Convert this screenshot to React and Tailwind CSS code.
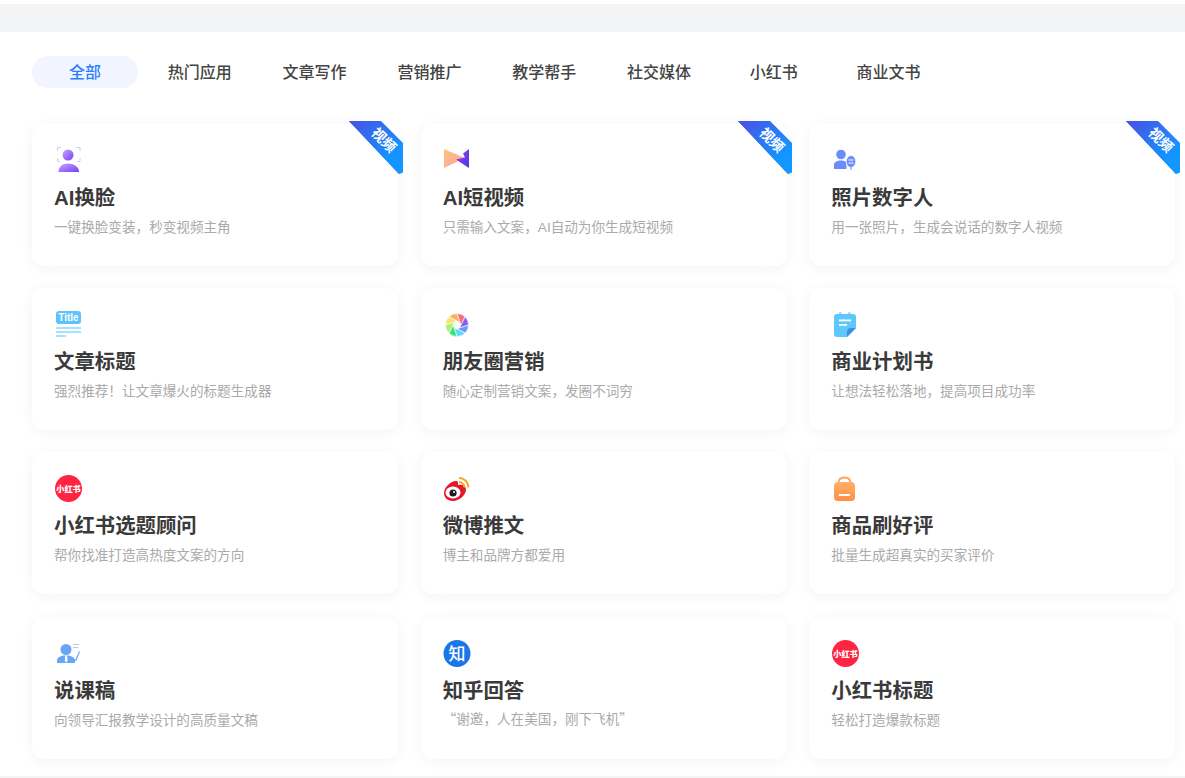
import React from "react";

const tabs = ["全部", "热门应用", "文章写作", "营销推广", "教学帮手", "社交媒体", "小红书", "商业文书"];

// Ribbon in the top right corner of the video cards
function Ribbon({ id }) {
  return (
    <div className="absolute top-[-3px] right-[-5px] w-[54px] h-[53px]">
      <svg width="54" height="53" viewBox="0 0 54 53" className="block">
        <defs>
          <linearGradient id={id} x1="0" y1="0" x2="1" y2="1">
            <stop offset="0" stopColor="#4a4fe4" />
            <stop offset="0.75" stopColor="#1296ff" />
          </linearGradient>
        </defs>
        <path d="M0 0H2L50 48V53Z" fill="#1a5fd0" />
        <path d="M0 0H32L54 22V50.5Q54 52 53 52L50 53Z" fill={`url(#${id})`} />
      </svg>
      <span className="absolute left-[18.5px] top-[10px] w-[32px] text-center text-[14px] leading-[18px] font-bold text-white rotate-45">视频</span>
    </div>
  );
}

function FaceIcon() {
  return (
    <svg width="28" height="28" viewBox="0 0 28 28" className="block">
      <defs>
        <linearGradient id="face" x1="0" y1="0" x2="1" y2="1">
          <stop offset="0" stopColor="#c4a8ff" />
          <stop offset="1" stopColor="#7a3cf5" />
        </linearGradient>
      </defs>
      <path d="M7 1.5H3.5V5M22 1.5H26V5M3.5 12V15.5H6M26 12V15.5H23" fill="none" stroke="#d6c6fd" strokeWidth="1" />
      <circle cx="14" cy="9" r="5.5" fill="url(#face)" />
      <path d="M4.5 26C4.5 20.5 8.5 17.5 14 17.5C19.5 17.5 25 20.5 25 26Z" fill="url(#face)" />
    </svg>
  );
}

function VideoIcon() {
  return (
    <svg width="28" height="28" viewBox="0 0 28 28" className="block">
      <defs>
        <linearGradient id="peach" x1="0" y1="0" x2="1" y2="1">
          <stop offset="0" stopColor="#ffc27d" />
          <stop offset="1" stopColor="#fda4a0" />
        </linearGradient>
        <linearGradient id="violet" x1="0" y1="0" x2="1" y2="1">
          <stop offset="0" stopColor="#a03cf5" />
          <stop offset="1" stopColor="#4a38e0" />
        </linearGradient>
      </defs>
      <path d="M1 3L22 12L1 22Z" fill="url(#peach)" />
      <path d="M26 3V22L13 13.5L22 11.5L20 7.5Z" fill="url(#violet)" />
    </svg>
  );
}

function TalkIcon() {
  return (
    <svg width="28" height="28" viewBox="0 0 28 28" className="block">
      <circle cx="10" cy="8.5" r="4.8" fill="#6b8cff" />
      <path d="M3 23V19C3 16 6 14.5 10 14.5C12 14.5 14 15 15.5 16V23Z" fill="#6b8cff" />
      <ellipse cx="20" cy="15.5" rx="4.8" ry="6" fill="#6b8cff" stroke="#ffffff" strokeWidth="0.8" />
      <path d="M20 21V24" stroke="#6b8cff" strokeWidth="1" />
      <path d="M17.5 14H22.5M17.5 17H22.5" stroke="#ffffff" strokeWidth="1" />
    </svg>
  );
}

function TitleIcon() {
  return (
    <svg width="28" height="28" viewBox="0 0 28 28" className="block">
      <rect x="2" y="1" width="25" height="13" rx="3" fill="#5cc3fb" />
      <text x="14.5" y="11" textAnchor="middle" fontSize="10" fontWeight="700" fill="#ffffff" fontFamily="'Liberation Sans', sans-serif">Title</text>
      <rect x="2" y="17" width="25" height="2" fill="#a5e2fd" />
      <rect x="2" y="21" width="25" height="2" fill="#a5e2fd" />
      <rect x="2" y="25" width="10" height="2" fill="#a5e2fd" />
    </svg>
  );
}

const blades = ["#f76f78", "#8a5cf0", "#6b9cf5", "#5cd8fb", "#3fe07f", "#b0f06f", "#f7e26a", "#f9b262"];

function ApertureIcon() {
  return (
    <svg width="28" height="28" viewBox="0 0 28 28" className="block">
      {blades.map((c, i) => (
        <path
          key={c}
          d="M14 3.5A11.5 11.5 0 0 1 22.13 6.87L18 15L16.83 12.17Z"
          fill={c}
          stroke="#ffffff"
          strokeWidth="0.6"
          transform={`rotate(${i * 45} 14 15)`}
        />
      ))}
    </svg>
  );
}

function NoteIcon() {
  return (
    <svg width="28" height="28" viewBox="0 0 28 28" className="block">
      <rect x="8" y="2" width="2.5" height="5" rx="1.2" fill="#8ed8fd" />
      <rect x="17" y="2" width="2.5" height="5" rx="1.2" fill="#8ed8fd" />
      <path d="M6 4H22Q25 4 25 7V18L16 27H6Q3 27 3 24V7Q3 4 6 4Z" fill="#5dc8fc" />
      <path d="M25 18L16 27V22Q16 18 20 18Z" fill="#3f8fe0" />
      <rect x="8" y="9.5" width="12" height="1.8" fill="#ffffff" />
      <rect x="8" y="14" width="8" height="1.8" fill="#ffffff" />
    </svg>
  );
}

function XhsIcon() {
  return (
    <svg width="28" height="28" viewBox="0 0 28 28" className="block">
      <circle cx="14.5" cy="14.5" r="13.5" fill="#ff2442" />
      <text x="14.5" y="17.5" textAnchor="middle" fontSize="8.2" fontWeight="900" fill="#ffffff" fontFamily="'Noto Sans CJK SC', sans-serif">小红书</text>
    </svg>
  );
}

function WeiboIcon() {
  return (
    <svg width="28" height="28" viewBox="0 0 28 28" className="block">
      <path d="M1 19C1 14 7 7 13 7C15 7 15.5 9 15 11C19 10 22.5 11.5 23 15C23.5 20 17 27 10 27C5 27 1 24 1 19Z" fill="#e6162d" />
      <ellipse cx="10" cy="18.5" rx="7.5" ry="6" fill="#ffffff" />
      <circle cx="10" cy="19" r="3.6" fill="#1c1c1c" />
      <circle cx="11" cy="18" r="1" fill="#ffffff" />
      <path d="M16 4A9.5 9.5 0 0 1 25.5 13.5M16 8A5.5 5.5 0 0 1 21.5 13.5" fill="none" stroke="#f5a623" strokeWidth="2" />
    </svg>
  );
}

function BagIcon() {
  return (
    <svg width="28" height="28" viewBox="0 0 28 28" className="block">
      <defs>
        <linearGradient id="bag" x1="0" y1="0" x2="0" y2="1">
          <stop offset="0" stopColor="#ffb06a" />
          <stop offset="1" stopColor="#ff8f40" />
        </linearGradient>
      </defs>
      <path d="M7.5 11V9C7.5 5.5 10 3.5 13.5 3.5C17 3.5 19.5 5.5 19.5 9V11" fill="none" stroke="#ffa45c" strokeWidth="1.8" />
      <rect x="3" y="8" width="21" height="19" rx="4" fill="url(#bag)" />
      <rect x="8" y="20" width="11" height="2" fill="#ffffff" />
    </svg>
  );
}

function TeacherIcon() {
  return (
    <svg width="28" height="28" viewBox="0 0 28 28" className="block">
      <circle cx="12" cy="10.5" r="5.5" fill="#6aa5f5" />
      <path d="M3 24V21.5C3 18.5 6.5 16.5 12 16.5C17.5 16.5 21 18.5 21 21.5V24Z" fill="#6aa5f5" />
      <path d="M11.3 16.5H13L13.6 21.5L12.2 24L10.8 21.5Z" fill="#ffffff" />
      <path d="M19 5.5H25M19 8.5H24" stroke="#a8cbf9" strokeWidth="1.2" />
      <path d="M25.5 12.5L21.5 22" stroke="#6aa5f5" strokeWidth="1.2" />
    </svg>
  );
}

function ZhihuIcon() {
  return (
    <svg width="28" height="28" viewBox="0 0 28 28" className="block">
      <circle cx="14" cy="14.5" r="13.5" fill="#1a77e8" />
      <text x="14" y="20.5" textAnchor="middle" fontSize="17" fontWeight="500" fill="#ffffff" fontFamily="'Noto Sans CJK SC', sans-serif">知</text>
    </svg>
  );
}

const cards = [
  { icon: <FaceIcon />, title: "AI换脸", desc: "一键换脸变装，秒变视频主角", video: true },
  { icon: <VideoIcon />, title: "AI短视频", desc: "只需输入文案，AI自动为你生成短视频", video: true },
  { icon: <TalkIcon />, title: "照片数字人", desc: "用一张照片，生成会说话的数字人视频", video: true },
  { icon: <TitleIcon />, title: "文章标题", desc: "强烈推荐！让文章爆火的标题生成器" },
  { icon: <ApertureIcon />, title: "朋友圈营销", desc: "随心定制营销文案，发圈不词穷" },
  { icon: <NoteIcon />, title: "商业计划书", desc: "让想法轻松落地，提高项目成功率" },
  { icon: <XhsIcon />, title: "小红书选题顾问", desc: "帮你找准打造高热度文案的方向" },
  { icon: <WeiboIcon />, title: "微博推文", desc: "博主和品牌方都爱用" },
  { icon: <BagIcon />, title: "商品刷好评", desc: "批量生成超真实的买家评价" },
  { icon: <TeacherIcon />, title: "说课稿", desc: "向领导汇报教学设计的高质量文稿" },
  {
    icon: <ZhihuIcon />,
    title: "知乎回答",
    // full width quotes, as the Liberation ones are too narrow
    desc: <span className="block -mt-[3px] font-['Noto_Sans_CJK_SC',sans-serif]">“谢邀，人在美国，刚下飞机”</span>,
  },
  { icon: <XhsIcon />, title: "小红书标题", desc: "轻松打造爆款标题" },
];

export default function App() {
  return (
    <div className="h-[778px] overflow-hidden flex flex-col bg-white pt-[4px] font-['Liberation_Sans','Noto_Sans_CJK_SC',sans-serif]">
      <div className="h-[28px] shrink-0 bg-[#f3f4f6]" />
      <div className="flex-1 pl-[32px] pr-[9.5px] pt-[24px]">
        <div className="flex gap-[8.8px]">
          {tabs.map((t, i) => (
            <div
              key={t}
              className={
                i === 0
                  ? "w-[106px] h-[32px] rounded-full bg-[#f2f5ff] text-[#2a7fff] text-[16px] font-medium leading-[34px] text-center"
                  : "w-[106px] h-[32px] text-[#444444] text-[16px] font-medium leading-[34px] text-center"
              }
            >
              {t}
            </div>
          ))}
        </div>
        <div className="grid grid-cols-3 gap-x-[22.5px] gap-y-[22.2px] mt-[36px]">
          {cards.map((c, i) => (
            <div key={c.title} className="relative h-[142px] rounded-[12px] bg-white pt-[22px] pl-[22px] shadow-[0_2px_14px_rgba(0,0,0,0.05)]">
              {c.video && <Ribbon id={`ribbon${i}`} />}
              <div className="h-[28px]">{c.icon}</div>
              <div className="mt-[9px] text-[20.4px] leading-[30px] font-bold text-[#3a3a3a]">{c.title}</div>
              <div className="mt-[5px] text-[13.6px] leading-[20px] text-[#aaaaaa]">{c.desc}</div>
            </div>
          ))}
        </div>
      </div>
      <div className="h-[2px] shrink-0 bg-[#f3f4f6]" />
    </div>
  );
}
